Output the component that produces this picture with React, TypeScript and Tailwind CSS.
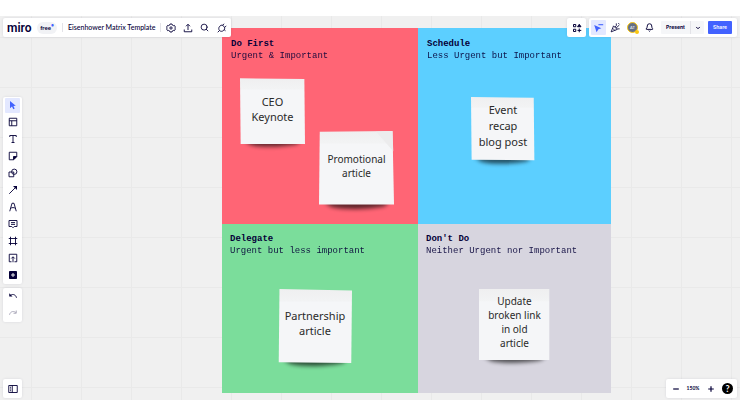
import React from 'react';
import { Bell, ChevronDown, Search } from 'lucide-react';
import clsx from 'clsx';

type IconProps = {
  children: React.ReactNode;
  className?: string;
};

const Icon = ({ children, className = 'size-[10px]' }: IconProps) => (
  <svg
    viewBox="0 0 20 20"
    fill="none"
    stroke="currentColor"
    strokeWidth="1.8"
    className={className}
    aria-hidden="true"
  >
    {children}
  </svg>
);

const CursorIcon = () => (
  <Icon>
    <path d="M4 2v14.5l4-3.5 2.6 5.5 2.8-1.3-2.6-5.3 4.7-.6z" fill="currentColor" stroke="none" />
  </Icon>
);

const TemplateIcon = () => (
  <Icon>
    <path d="M2.5 2.5h15v15h-15zM2.5 7.5h15M7.5 7.5v10" />
  </Icon>
);

const TextIcon = () => (
  <Icon>
    <path d="M3.5 6V3h13v3M10 3v14M7 17h6" />
  </Icon>
);

const StickyIcon = () => (
  <Icon>
    <path d="M2.5 2.5h15v9l-6 6h-9z" />
    <path d="M11 17v-6h6z" fill="currentColor" />
  </Icon>
);

const ShapesIcon = () => (
  <Icon>
    <circle cx="12.5" cy="7.5" r="5.3" />
    <path d="M7 8H2v9.5h9.5V13" />
    <path d="M7 8h4.5v5" />
  </Icon>
);

const ArrowIcon = () => (
  <Icon>
    <path d="M2.5 17.5L14 6" />
    <path d="M18 2v8l-8-8z" fill="currentColor" stroke="none" />
  </Icon>
);

const PenIcon = () => (
  <Icon>
    <path d="M3.5 18.5L8 2.5h4l4.5 16M4.8 13c3-2.5 7.4-2.5 10.400 0" />
  </Icon>
);

const CommentIcon = () => (
  <Icon>
    <path d="M2 3h16v12h-5.500L10 17.500 7.500 15H2zM6 7.200h8M6 10.800h8" />
  </Icon>
);

const FrameIcon = () => (
  <Icon>
    <path d="M5 1.5v17M15 1.5v17M1.5 5h17M1.5 15h17" />
  </Icon>
);

const ImportIcon = () => (
  <Icon>
    <path d="M7 17.5H2.5v-15h15v15H13M10 18.5V8M6.5 11L10 7.5l3.5 3.5" />
  </Icon>
);

const MoreIcon = () => (
  <Icon>
    <rect x="2" y="2" width="16" height="16" rx="1.5" fill="currentColor" stroke="none" />
    <path d="M10 6v8M6 10h8" stroke="#fff" />
  </Icon>
);

const UndoIcon = () => (
  <Icon>
    <path d="M4 9.5c4-4 11-3.500 13 4" />
    <path d="M2.5 4.5v6.500H9z" fill="currentColor" stroke="none" />
  </Icon>
);

const RedoIcon = () => (
  <Icon>
    <path d="M16 9.5c-4-4-11-3.500-13 4M16.500 5v5.500H11" />
  </Icon>
);

const GearIcon = () => (
  <Icon>
    <path d="M8 2h4l.8 2.300 1.700 1 2.400-.500 2 3.500L17.300 10l1.600 1.800-2 3.500-2.400-.500-1.700 1L12 18H8l-.8-2.200-1.700-1-2.400.500-2-3.500L2.700 10 1.100 8.300l2-3.500 2.400.500 1.700-1z" />
    <circle cx="10" cy="10" r="2.300" />
  </Icon>
);

const ExportIcon = () => (
  <Icon>
    <path d="M2.5 13v4.500h15V13M10 14V3M6 6.500l4-4 4 4" />
  </Icon>
);

const PlugIcon = () => (
  <Icon>
    <path d="M5.5 6.500c3-3.500 6-2.500 8 0s3 5 0 8-6.500 2.500-8.500.500-2-6 .500-8.500zM5 15l-3.500 3.500M11.500 4.500L14 1.500M15.500 8.500l3-2.500M14 13l3 2.500" />
  </Icon>
);

const AppsIcon = () => (
  <Icon>
    <path d="M3 3h4.500v4.500H3zM3 12.500h4.500V17H3zM14.500 11v7.500M11 14.800h7.500" strokeWidth="2" />
    <path d="M14.500 2.500L18 7.500h-7z" fill="currentColor" />
  </Icon>
);

const CollabCursorIcon = () => (
  <Icon className="size-[12px]">
    <path d="M2 5l12 5.500-5 1.500-3 5z" fill="currentColor" stroke="none" />
    <path d="M9 4.500h8" />
  </Icon>
);

const ConfettiIcon = () => (
  <Icon className="size-[11px]">
    <path d="M6.500 7L2 18l11-4.500zM5 11.500l4 4M9 9.500l2.500-3V2.500M11 11l6-5.500M13 12.500h4.500M15 2l2 2" strokeWidth="1.500" />
  </Icon>
);

const PanelIcon = () => (
  <Icon>
    <path d="M1.5 3h17v14h-17zM8.500 3v14" />
    <path d="M4 6.500h2M4 10h2M4 13.500h2" />
  </Icon>
);

type ToolButtonProps = {
  label: string;
  active?: boolean;
  muted?: boolean;
  children: React.ReactNode;
};

const ToolButton = ({ label, active, muted, children }: ToolButtonProps) => (
  <button
    type="button"
    aria-label={label}
    className={clsx(
      'flex size-[15px] shrink-0 items-center justify-center rounded-[1px]',
      active && 'bg-[#e3e8ff] text-[#4262ff]',
      muted && 'text-[#a5a3b5]'
    )}
  >
    {children}
  </button>
);

const Panel = ({ children, className }: { children: React.ReactNode; className?: string }) => (
  <div className={clsx('flex bg-white rounded-[2px] shadow-[0_0_3px_rgba(5,0,56,0.1)]', className)}>
    {children}
  </div>
);

const tools = [
  { label: 'Select', icon: <CursorIcon />, active: true },
  { label: 'Templates', icon: <TemplateIcon /> },
  { label: 'Text', icon: <TextIcon /> },
  { label: 'Sticky note', icon: <StickyIcon /> },
  { label: 'Shapes', icon: <ShapesIcon /> },
  { label: 'Connection line', icon: <ArrowIcon /> },
  { label: 'Pen', icon: <PenIcon /> },
  { label: 'Comment', icon: <CommentIcon /> },
  { label: 'Frame', icon: <FrameIcon /> },
  { label: 'Upload', icon: <ImportIcon /> },
  { label: 'More apps', icon: <MoreIcon /> },
];

const quadrants = [
  { title: 'Do First', subtitle: 'Urgent & Important', className: 'bg-[#ff6575] pl-[9px] pt-[10px]' },
  { title: 'Schedule', subtitle: 'Less Urgent but Important', className: 'bg-[#5ccfff] pl-[9px] pt-[10px]' },
  { title: 'Delegate', subtitle: 'Urgent but less important', className: 'bg-[#7bdd9b] pl-[8px] pt-[9px]' },
  { title: "Don't Do", subtitle: 'Neither Urgent nor Important', className: 'bg-[#d7d5df] pl-[8px] pt-[9px]' },
];

// paper is the outline of the sheet on a 100 x 100 square
const notes = [
  {
    lines: ['CEO', 'Keynote'],
    className: 'left-[18px] top-[51px] size-[65px] text-[11px] leading-[15px]',
    paper: '0,-1 99,0 100,100 1,100',
  },
  {
    lines: ['Promotional', 'article'],
    className: 'left-[97px] top-[103px] size-[75px] text-[10px] leading-[14px]',
    paper: '1,1 98,0 100,98 0,98',
    fold: true,
  },
  {
    lines: ['Event', 'recap', 'blog post'],
    className: 'left-[249px] top-[69px] size-[64px] text-[11px] leading-[16px]',
    paper: '0,0 98,1 99,99 1,98',
  },
  {
    lines: ['Partnership', 'article'],
    className: 'left-[56px] top-[261px] size-[74px] text-[11px] leading-[15px]',
    paper: '2,0 100,2 99,100 1,99',
  },
  {
    lines: ['Update', 'broken link', 'in old', 'article'],
    className: 'left-[257px] top-[261px] size-[71px] text-[10px] leading-[14px]',
    paper: '0,0 99,0 99,100 0,100',
  },
];

const StickyNote = ({ lines, className, paper, fold }: (typeof notes)[number]) => (
  <div className={clsx('absolute flex flex-col items-center justify-center pb-[6px] text-[#2a2a2a] font-["Noto_Sans",sans-serif]', className)}>
    <svg viewBox="0 0 100 100" className="absolute inset-0 size-full overflow-visible" aria-hidden="true">
      <defs>
        <linearGradient id="paper" x1="0" y1="0" x2="0" y2="1">
          <stop offset="0" stopColor="#efeff0" />
          <stop offset="0.16" stopColor="#f2f3f4" />
          <stop offset="0.18" stopColor="#f5f6f8" />
          <stop offset="1" stopColor="#f5f6f8" />
        </linearGradient>
        <filter id="soft" x="-20%" y="-100%" width="140%" height="300%">
          <feGaussianBlur stdDeviation="3" />
        </filter>
      </defs>
      <path d="M6 94h88l-6 6c-20 4-52 6-72 1z" fill="#000" opacity="0.65" filter="url(#soft)" />
      <polygon points={paper} fill="url(#paper)" />
      {fold && <path d="M76 1L98 0l1 27z" fill="#ececed" />}
    </svg>
    {lines.map((line) => (
      <span key={line} className="relative whitespace-nowrap">{line}</span>
    ))}
  </div>
);

const Board = () => (
  <div className="absolute left-[222px] top-[12px]">
    <div className="grid grid-cols-[196px_193px] grid-rows-[196px_169px]">
      {quadrants.map((q) => (
        <section key={q.title} className={clsx('font-["Liberation_Mono",monospace] text-[9px] leading-[12px] text-[#050038]', q.className)}>
          <h2 className="font-bold">{q.title}</h2>
          <p className="whitespace-nowrap opacity-90">{q.subtitle}</p>
        </section>
      ))}
    </div>
    {notes.map((note) => (
      <StickyNote key={note.lines[0]} {...note} />
    ))}
  </div>
);

const Header = () => (
  <header className="flex justify-between">
    <Panel className="h-[19px] items-center pl-1 pr-[2px]">
      <a href="#" className='w-[30px] font-["Roboto",sans-serif] text-[12px] leading-[16px] font-semibold'>miro</a>
      <span className="flex h-3 w-5 items-center justify-center rounded-full bg-[#f1f2f5] text-[6px] font-bold">
        free<span className="pb-1 text-[5px] text-[#4262ff]">•</span>
      </span>
      <span className="ml-[5px] h-[9px] w-px bg-[#e3e3e8]" />
      <h1 className="mx-[5px] whitespace-nowrap text-[7px] font-medium">Eisenhower Matrix Template</h1>
      <span className="mr-[2px] h-[9px] w-px bg-[#e3e3e8]" />
      <div className="flex gap-[2px]">
        <ToolButton label="Settings"><GearIcon /></ToolButton>
        <ToolButton label="Export"><ExportIcon /></ToolButton>
        <ToolButton label="Search"><Search className="size-[9px]" strokeWidth={2.3} /></ToolButton>
        <ToolButton label="Integrations"><PlugIcon /></ToolButton>
      </div>
    </Panel>

    <div className="flex gap-[3px]">
      <Panel className="h-[19px] items-center px-[2px]">
        <ToolButton label="Apps"><AppsIcon /></ToolButton>
      </Panel>
      <Panel className="h-[19px] items-center gap-1 pl-[2px] pr-[5px]">
        <div className="flex gap-[2px]">
          <ToolButton label="Hide cursors" active><CollabCursorIcon /></ToolButton>
          <ToolButton label="Reactions"><ConfettiIcon /></ToolButton>
          <ToolButton label="Account">
            <span className="relative flex size-[11px] items-center justify-center rounded-full border border-[#fac710] bg-[#667085] text-[4px] text-white">
              AT
              <span className="absolute -bottom-[2px] -right-[2px] size-1 rounded-full bg-[#fac710]" />
            </span>
          </ToolButton>
          <ToolButton label="Notifications"><Bell className="size-[9px]" strokeWidth={2.5} /></ToolButton>
        </div>
        <div className='flex h-[13px] rounded-[1px] bg-[#f5f6f8] font-["Inter",sans-serif] text-[5px] font-bold'>
          <button type="button" className="w-[30px] border-r border-[#e3e3e8]">Present</button>
          <button type="button" aria-label="Present options" className="flex w-[13px] items-center justify-center">
            <ChevronDown className="size-[6px]" strokeWidth={4} />
          </button>
        </div>
        <button type="button" className='h-[13px] w-6 rounded-[1px] bg-[#4262ff] font-["Inter",sans-serif] text-[5px] font-semibold text-white'>Share</button>
      </Panel>
    </div>
  </header>
);

const Sidebar = () => (
  <nav className="flex flex-1 flex-col items-start justify-center gap-1 pt-[2px]">
    <Panel className="flex-col gap-[2px] px-[2px] py-px">
      {tools.map((tool) => (
        <ToolButton key={tool.label} label={tool.label} active={tool.active}>{tool.icon}</ToolButton>
      ))}
    </Panel>
    <Panel className="flex-col gap-[2px] px-[2px] py-px">
      <ToolButton label="Undo"><UndoIcon /></ToolButton>
      <ToolButton label="Redo" muted><RedoIcon /></ToolButton>
    </Panel>
  </nav>
);

const Footer = () => (
  <footer className="flex justify-between">
    <Panel className="h-[19px] items-center px-[2px]">
      <ToolButton label="Frames list"><PanelIcon /></ToolButton>
    </Panel>
    <Panel className="h-[19px] items-center gap-[2px] pl-[2px] pr-1">
      <ToolButton label="Zoom out"><Icon className="size-[8px]"><path d="M3 10h14" strokeWidth="3" /></Icon></ToolButton>
      <span className="w-4 text-center text-[5px] font-bold">150%</span>
      <ToolButton label="Zoom in"><Icon className="size-[8px]"><path d="M3 10h14M10 3v14" strokeWidth="3" /></Icon></ToolButton>
      <button type="button" className="ml-[2px] flex size-[11px] items-center justify-center rounded-full bg-black text-[9px] font-bold text-white">?</button>
    </Panel>
  </footer>
);

const App = () => (
  <div className='flex min-h-screen flex-col bg-white py-4 font-["Lato",sans-serif] text-[#050038]'>
    <main className="relative flex flex-1 flex-col overflow-hidden bg-[#f0f0f0] bg-[linear-gradient(to_right,#e9e9e9_1px,transparent_1px),linear-gradient(to_bottom,#e9e9e9_1px,transparent_1px)] bg-[length:50px_50px] bg-[position:31px_21px]">
      <Board />
      <div className="relative flex flex-1 flex-col px-[3px] py-[2px]">
        <Header />
        <Sidebar />
        <Footer />
      </div>
    </main>
  </div>
);

export default App;
